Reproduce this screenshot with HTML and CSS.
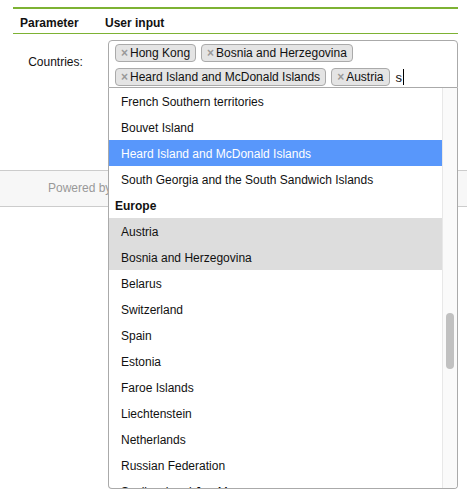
FILE: index.html
```html
<!DOCTYPE html>
<html lang="en">
<head>
<meta charset="utf-8">
<title>Parameters</title>
<link rel="stylesheet" href="styles.css">
</head>
<body>
<div class="page">
  <table class="params">
    <colgroup><col class="col-param"><col></colgroup>
    <thead>
      <tr><th>Parameter</th><th>User input</th></tr>
    </thead>
    <tbody>
      <tr>
        <td class="label">Countries:</td>
        <td class="input-cell">
          <div class="select">
            <div class="selection">
              <ul class="choices">
                <li class="choice"><span class="choice-remove">×</span>Hong Kong</li>
                <li class="choice"><span class="choice-remove">×</span>Bosnia and Herzegovina</li>
                <li class="choice"><span class="choice-remove">×</span>Heard Island and McDonald Islands</li>
                <li class="choice"><span class="choice-remove">×</span>Austria</li>
                <li class="search"><span class="search-text">s</span><span class="caret"></span></li>
              </ul>
            </div>
            <div class="dropdown">
              <ul class="results">
                <li class="group"><strong class="group-label">Africa</strong>
                  <ul class="options">
                    <li class="option">Botswana</li>
                    <li class="option">Burkina Faso</li>
                    <li class="option">Comoros</li>
                    <li class="option">Guinea-Bissau</li>
                    <li class="option">Lesotho</li>
                    <li class="option">Madagascar</li>
                    <li class="option">Mauritius</li>
                    <li class="option">Saint Helena</li>
                    <li class="option">Sao Tome and Principe</li>
                    <li class="option">Senegal</li>
                    <li class="option">Seychelles</li>
                    <li class="option">Sierra Leone</li>
                    <li class="option">Somalia</li>
                    <li class="option">South Africa</li>
                    <li class="option">Sudan</li>
                    <li class="option">Swaziland</li>
                    <li class="option">Tunisia</li>
                    <li class="option">Western Sahara</li>
                  </ul>
                </li>
                <li class="group"><strong class="group-label">Asia</strong>
                  <ul class="options">
                    <li class="option">Afghanistan</li>
                    <li class="option">Bangladesh</li>
                    <li class="option">Brunei Darussalam</li>
                    <li class="option">Cyprus</li>
                    <li class="option">Indonesia</li>
                    <li class="option">Israel</li>
                    <li class="option">Kazakhstan</li>
                    <li class="option">Kyrgyzstan</li>
                    <li class="option">Lao People's Democratic Republic</li>
                    <li class="option">Malaysia</li>
                    <li class="option">Maldives</li>
                    <li class="option">Pakistan</li>
                    <li class="option">Palestine</li>
                    <li class="option">Philippines</li>
                    <li class="option">Saudi Arabia</li>
                    <li class="option">Singapore</li>
                    <li class="option">South Korea</li>
                    <li class="option">Sri Lanka</li>
                    <li class="option">Syria</li>
                    <li class="option">Tajikistan</li>
                    <li class="option">East Timor</li>
                    <li class="option">Turkmenistan</li>
                    <li class="option">United Arab Emirates</li>
                    <li class="option">Uzbekistan</li>
                  </ul>
                </li>
                <li class="group"><strong class="group-label">North America</strong>
                  <ul class="options">
                    <li class="option">Bahamas</li>
                    <li class="option">Barbados</li>
                    <li class="option">Cayman Islands</li>
                    <li class="option">Costa Rica</li>
                    <li class="option">El Salvador</li>
                    <li class="option">Honduras</li>
                    <li class="option">Saint Lucia</li>
                    <li class="option">United States</li>
                    <li class="option">Virgin Islands, U.S.</li>
                  </ul>
                </li>
                <li class="group" id="group-antarctica"><strong class="group-label">Antarctica</strong>
                  <ul class="options">
                    <li class="option">French Southern territories</li>
                    <li class="option">Bouvet Island</li>
                    <li class="option highlighted">Heard Island and McDonald Islands</li>
                    <li class="option">South Georgia and the South Sandwich Islands</li>
                  </ul>
                </li>
                <li class="group"><strong class="group-label">Europe</strong>
                  <ul class="options">
                    <li class="option selected">Austria</li>
                    <li class="option selected">Bosnia and Herzegovina</li>
                    <li class="option">Belarus</li>
                    <li class="option">Switzerland</li>
                    <li class="option">Spain</li>
                    <li class="option">Estonia</li>
                    <li class="option">Faroe Islands</li>
                    <li class="option">Liechtenstein</li>
                    <li class="option">Netherlands</li>
                    <li class="option">Russian Federation</li>
                    <li class="option">Svalbard and Jan Mayen</li>
                    <li class="option">Slovakia</li>
                    <li class="option">Slovenia</li>
                    <li class="option">San Marino</li>
                    <li class="option">Sweden</li>
                    <li class="option">Serbia</li>
                    <li class="option">Isle of Man</li>
                    <li class="option">Jersey</li>
                    <li class="option">Guernsey</li>
                    <li class="option">Luxembourg</li>
                    <li class="option">Holy See (Vatican City State)</li>
                    <li class="option">Åland Islands</li>
                  </ul>
                </li>
                <li class="group"><strong class="group-label">Oceania</strong>
                  <ul class="options">
                    <li class="option">American Samoa</li>
                    <li class="option">Australia</li>
                    <li class="option">Cook Islands</li>
                    <li class="option">Marshall Islands</li>
                    <li class="option">Micronesia</li>
                    <li class="option">Norfolk Island</li>
                    <li class="option">Northern Mariana Islands</li>
                    <li class="option">Samoa</li>
                    <li class="option">Solomon Islands</li>
                    <li class="option">Wallis and Futuna</li>
                    <li class="option">United States Minor Outlying Islands</li>
                    <li class="option">Christmas Island</li>
                    <li class="option">Cocos (Keeling) Islands</li>
                  </ul>
                </li>
                <li class="group"><strong class="group-label">South America</strong>
                  <ul class="options">
                    <li class="option">Falkland Islands</li>
                    <li class="option">Suriname</li>
                  </ul>
                </li>
              </ul>
              <div class="scrollbar"><div class="scrollbar-thumb"></div></div>
            </div>
          </div>
        </td>
      </tr>
    </tbody>
  </table>
</div>
<footer class="footer">Powered by SpreadsheetConverter</footer>
<script src="app.js"></script>
</body>
</html>
```
FILE: styles.css
```css
* { box-sizing: border-box; }

html {
  height: 100%;
}

html, body {
  margin: 0;
  background: #fff;
}

body {
  min-height: 100%;
  font-family: "Liberation Sans", Arial, Helvetica, sans-serif;
  font-size: 12px;
  color: #111;
}

.page {
  padding: 7px 9px 0 13px;
}

/* parameter table */
.params {
  width: 100%;
  table-layout: fixed;
  border-collapse: separate;
  border-spacing: 0;
  border-top: 2px solid #7db233;
}

.col-param { width: 85px; }

.params th {
  text-align: left;
  font-weight: bold;
  line-height: 14px;
  padding: 7px 7px 3px;
  border-bottom: 1px solid #7db233;
}

.label {
  text-align: center;
  vertical-align: middle;
  font-size: 12px;
  padding: 0 7px 4px;
}

.input-cell {
  padding: 6px 0 6px 10px;
  vertical-align: top;
}

/* multi-select */
.select {
  position: relative;
}

.selection {
  border: 1px solid #aaa;
  border-radius: 4px 4px 0 0;
  background: #fff;
}

.choices {
  list-style: none;
  margin: 0;
  padding: 3px 6px 1px;
  display: flex;
  flex-wrap: wrap;
  align-items: flex-start;
  gap: 6px 5px;
}

.choice {
  border: 1px solid #aaa;
  border-radius: 4px;
  background: #e4e4e4;
  padding: 0 5px;
  line-height: 16px;
  white-space: nowrap;
  color: #111;
}

.choice-remove {
  color: #999;
  font-weight: bold;
  margin-right: 2px;
}

.search {
  display: flex;
  align-items: center;
  height: 18px;
  padding-left: 1px;
  font-size: 13px;
}

.caret {
  display: inline-block;
  width: 1px;
  height: 16px;
  margin-left: 1px;
  background: #000;
}

/* open dropdown */
.dropdown {
  position: absolute;
  top: 100%;
  left: 0;
  right: 0;
  z-index: 10;
  display: flex;
  background: #fff;
  border: 1px solid #aaa;
  border-top: none;
  border-radius: 0 0 4px 4px;
  overflow: hidden;
}

.results {
  flex: 1;
  min-width: 0;
  list-style: none;
  margin: 0;
  padding: 0;
  max-height: 400px;
  overflow: hidden;
}

.scrollbar {
  flex: none;
  width: 15px;
  padding: 0 3px;
  background: #fafafa;
  border-left: 1px solid #e8e8e8;
}

.scrollbar-thumb {
  width: 8px;
  border-radius: 4px;
  background: #c1c1c1;
}

.options {
  list-style: none;
  margin: 0;
  padding: 0;
}

.group-label {
  display: block;
  padding: 7px 6px 5px;
  line-height: 14px;
  font-weight: bold;
  color: #111;
}

.option {
  padding: 7px 6px 5px 12px;
  line-height: 14px;
  white-space: nowrap;
}

.option.selected {
  background: #ddd;
}

.option.highlighted {
  background: #5897fb;
  color: #fff;
}

/* footer */
.footer {
  margin-top: 76px;
  border-top: 1px solid #ccc;
  border-bottom: 1px solid #ccc;
  background: #f7f7f7;
  color: #999;
  font-size: 12px;
  line-height: 15px;
  padding: 10px 0 10px 48px;
}
```
FILE: app.js
```js
// Scroll the result list so the Antarctica options start at the top,
// then size and place the scrollbar thumb from the scroll position.
(function () {
  var results = document.querySelector('.results');
  var firstOption = document.querySelector('#group-antarctica .option');
  var thumb = document.querySelector('.scrollbar-thumb');

  results.scrollTop = firstOption.offsetTop - results.offsetTop;

  var trackHeight = results.clientHeight;
  var contentHeight = results.scrollHeight;
  var inset = 3;
  var thumbLength = Math.round(trackHeight * trackHeight / contentHeight);
  var thumbOffset = Math.round(trackHeight * results.scrollTop / contentHeight);

  thumb.style.height = (thumbLength - inset * 2) + 'px';
  thumb.style.marginTop = (thumbOffset + inset) + 'px';
})();
```
